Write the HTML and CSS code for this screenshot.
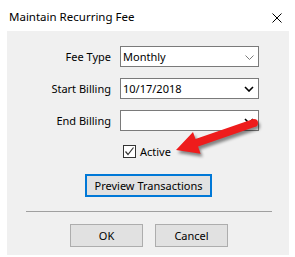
FILE: index.html
```html
<!DOCTYPE html>
<html lang="en">
<head>
    <meta charset="UTF-8">
    <title>Maintain Recurring Fee</title>
    <link rel="stylesheet" href="styles.css">
</head>
<body>
    <div id="dialog">
        <div id="title-bar">
            <div id="title">Maintain Recurring Fee</div>
            <svg id="close" width="10" height="10" viewBox="0 0 10 10">
                <path d="M0.5 0.5 L9.5 9.5 M9.5 0.5 L0.5 9.5" stroke="#000" stroke-width="1"/>
            </svg>
        </div>
        <div id="panel">
            <div id="form">
                <label class="field-label">Fee Type</label>
                <div class="combo">
                    <span class="combo-value">Monthly</span>
                    <svg class="chevron" width="9" height="5" viewBox="0 0 9 5"><path d="M0.5 0.5 L4.5 4.5 L8.5 0.5" fill="none" stroke="#7a7a7a" stroke-width="1"/></svg>
                </div>
                <label class="field-label">Start Billing</label>
                <div class="combo">
                    <span class="combo-value">10/17/2018</span>
                    <svg class="chevron" width="10" height="6" viewBox="0 0 10 6"><path d="M1 1 L5 5 L9 1" fill="none" stroke="#000" stroke-width="1.6"/></svg>
                </div>
                <label class="field-label">End Billing</label>
                <div class="combo">
                    <span class="combo-value"></span>
                    <svg class="chevron" width="10" height="6" viewBox="0 0 10 6"><path d="M1 1 L5 5 L9 1" fill="none" stroke="#000" stroke-width="1.6"/></svg>
                </div>
            </div>
            <div id="active-row">
                <div class="checkbox">
                    <svg width="11" height="11" viewBox="0 0 11 11"><path d="M1.5 5.5 L4 8.5 L9.5 1.5" fill="none" stroke="#333" stroke-width="1.2"/></svg>
                </div>
                <span>Active</span>
            </div>
            <div id="preview-row">
                <button class="btn default">Preview Transactions</button>
            </div>
            <div id="separator"></div>
            <div id="footer">
                <button class="btn">OK</button>
                <button class="btn">Cancel</button>
            </div>
        </div>
        <!-- red callout arrow over the dialog -->
        <svg id="callout" width="295" height="257" viewBox="0 0 295 257">
            <g class="arrow">
                <path d="M176 150 L193 131.9 L195.5 139 L252.7 119.2 L255.3 126.8 L198.1 146.6 L200.6 153.7 Z" fill="#ee1c1c"/>
                <circle cx="254" cy="123" r="4" fill="#ee1c1c"/>
            </g>
        </svg>
    </div>
</body>
</html>
```

FILE: styles.css
```css
body {
    margin: 0;
    font-family: "Noto Sans", "Open Sans", sans-serif;
    font-size: 11px;
    color: #000;
    background-color: #ffffff;
}
#dialog {
    position: relative;
    width: 295px;
    height: 257px;
    background-color: #ffffff;
    display: flex;
    flex-direction: column;
}
#title-bar {
    height: 31px;
    display: flex;
    align-items: center;
    justify-content: space-between;
    padding: 0 13px 0 9px;
    box-sizing: border-box;
}
#title {
    font-size: 11.5px;
    margin-top: 2px;
}
#close {
    margin-top: 4px;
}
#panel {
    margin: 0 6px 0 7px;
    height: 224px;
    background-color: #f0f0f0;
    display: flex;
    flex-direction: column;
    padding-top: 15px;
    box-sizing: border-box;
}
#form {
    display: grid;
    grid-template-columns: 104px 139px;
    column-gap: 9px;
    row-gap: 11px;
    align-items: center;
}
.field-label {
    text-align: right;
}
.combo {
    height: 21px;
    border: 1px solid #7a7a7a;
    background-color: #ffffff;
    box-sizing: border-box;
    display: flex;
    align-items: center;
    justify-content: space-between;
    padding: 0 4px 0 2px;
}
.combo-value {
    line-height: 16px;
}
.chevron {
    margin-top: 1px;
}
#active-row {
    display: flex;
    align-items: center;
    margin: 13px 0 0 116px;
    height: 14px;
}
.checkbox {
    width: 13px;
    height: 13px;
    border: 1px solid #333;
    background-color: #ffffff;
    box-sizing: border-box;
    display: flex;
    align-items: center;
    justify-content: center;
    margin-right: 4px;
}
#preview-row {
    margin-top: 16px;
    padding-left: 78px;
}
.btn {
    font-family: inherit;
    font-size: 11px;
    color: #000;
    background-color: #e1e1e1;
    border: 1px solid #adadad;
    height: 23px;
    padding: 0;
    box-sizing: border-box;
}
.btn.default {
    width: 127px;
    border: 2px solid #0078d7;
}
#separator {
    margin: 14px 17px 0 19px;
    border-top: 1px solid #a0a0a0;
}
#footer {
    display: flex;
    gap: 12px;
    margin: 12px 0 0 63px;
}
#footer .btn {
    width: 73px;
}
#callout {
    position: absolute;
    left: 0;
    top: 0;
    pointer-events: none;
}
.arrow {
    filter: drop-shadow(2px 3px 1.5px rgba(0, 0, 0, 0.45));
}
```
